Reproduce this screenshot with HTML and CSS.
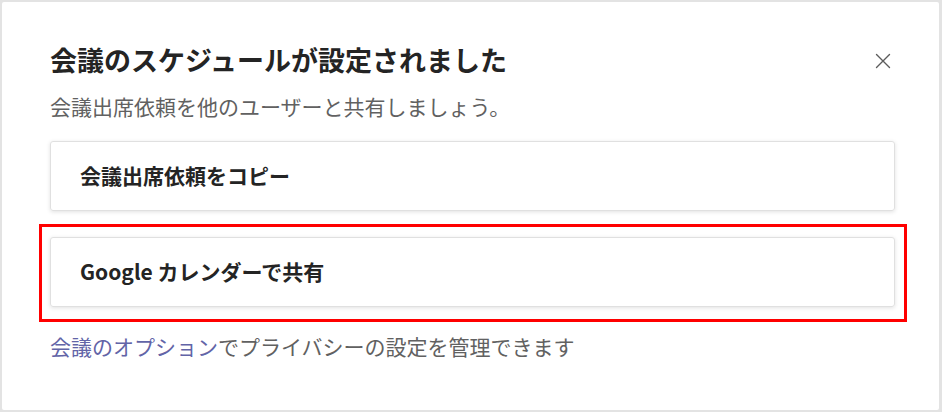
FILE: index.html
```html
<!DOCTYPE html>
<html lang="ja">
<head>
<meta charset="utf-8">
<title>会議のスケジュールが設定されました</title>
<link rel="stylesheet" href="styles.css">
</head>
<body>
<div class="dialog">
  <div class="header">
    <h1 class="title">会議のスケジュールが設定されました</h1>
    <button class="close" aria-label="閉じる">
      <svg width="16" height="16" viewBox="0 0 16 16"><path d="M1.5 1.5 L14.5 14.5 M14.5 1.5 L1.5 14.5" stroke="#5c5c5c" stroke-width="1.4" stroke-linecap="round"/></svg>
    </button>
  </div>
  <p class="subtitle">会議出席依頼を他のユーザーと共有しましょう。</p>
  <div class="card">会議出席依頼をコピー</div>
  <div class="card highlighted">Google カレンダーで共有</div>
  <p class="footer"><a class="link" href="#">会議のオプション</a>でプライバシーの設定を管理できます</p>
</div>
</body>
</html>
```
FILE: styles.css
```css
html, body {
  margin: 0;
  padding: 0;
}
body {
  background: #e3e3e3;
  width: 942px;
  height: 412px;
  overflow: hidden;
  font-family: "Noto Sans CJK JP", "Noto Sans", sans-serif;
}
.dialog {
  box-sizing: border-box;
  margin: 2px 3px 0 2px;
  height: 408px;
  background: #ffffff;
  border-radius: 2px;
  padding: 40px 44px 0 48px;
}
.header {
  display: flex;
  align-items: center;
  justify-content: space-between;
}
.title {
  margin: 0;
  font-size: 27px;
  line-height: 36px;
  font-weight: 700;
  color: #242424;
}
.close {
  border: 0;
  background: none;
  padding: 0;
  margin-right: 4px;
  margin-top: 2px;
  width: 16px;
  height: 16px;
  display: flex;
}
.subtitle {
  margin: 13px 0 0;
  font-size: 21px;
  line-height: 30px;
  color: #616161;
}
.card {
  box-sizing: border-box;
  height: 70px;
  margin-top: 20px;
  border: 1px solid #e0e0e0;
  border-radius: 3px;
  box-shadow: 0 1px 4px rgba(0, 0, 0, 0.12);
  display: flex;
  align-items: center;
  padding-left: 29px;
  padding-bottom: 3px;
  font-size: 21px;
  font-weight: 700;
  color: #242424;
}
.card + .card {
  margin-top: 26px;
}
.highlighted {
  position: relative;
}
.highlighted::after {
  content: "";
  position: absolute;
  top: -14px;
  left: -12px;
  right: -13px;
  bottom: -16px;
  border: 3px solid #ff0000;
}
.footer {
  margin: 24px 0 0;
  font-size: 21px;
  line-height: 30px;
  color: #616161;
}
.link {
  color: #6264a7;
  text-decoration: none;
}
```
